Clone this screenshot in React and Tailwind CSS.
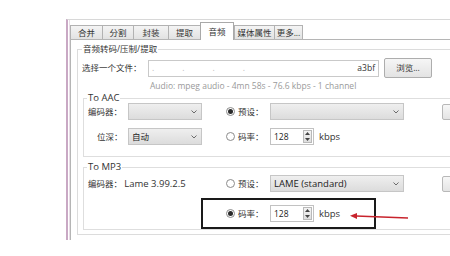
function Radio({ on }) {
  return (
    <span className="w-[9px] h-[9px] rounded-full border border-[#8c8c8c] bg-white flex items-center justify-center shrink-0">
      {on && <span className="w-[5px] h-[5px] rounded-full bg-[#2a2a2a]" />}
    </span>
  );
}

function Select({ width, value }) {
  return (
    <div
      className={`${width} h-[17px] border border-[#c6c6c6] bg-gradient-to-b from-[#efefef] to-[#dcdcdc] flex items-center justify-between pl-[3px] pr-[4px] shrink-0`}
    >
      <span className="text-[#222]">{value}</span>
      <svg width="6" height="4" viewBox="0 0 6 4">
        <path d="M0.5 0.5 L3 3 L5.5 0.5" fill="none" stroke="#6b6b6b" strokeWidth="1" />
      </svg>
    </div>
  );
}

function Spin({ value }) {
  return (
    <div className="w-[44px] h-[17px] border border-[#c2c2c2] bg-white flex items-center shrink-0">
      <span className="flex-1 pl-[3px] text-[#222]">{value}</span>
      <div className="w-[9px] h-[13px] mr-[1px] border border-[#b9b9b9] bg-gradient-to-b from-[#f4f4f4] to-[#dedede] flex flex-col items-center justify-around">
        <svg width="5" height="3" viewBox="0 0 5 3">
          <path d="M0 3 L2.5 0 L5 3 Z" fill="#444" />
        </svg>
        <svg width="5" height="3" viewBox="0 0 5 3">
          <path d="M0 0 L2.5 3 L5 0 Z" fill="#444" />
        </svg>
      </div>
    </div>
  );
}

function SideButton() {
  return <div className="w-[20px] h-[16px] ml-[38px] border border-[#b8b8b8] rounded-[2px] bg-gradient-to-b from-[#f7f7f7] to-[#e4e4e4] shrink-0" />;
}

const tabs = [
  { name: "合并", w: "w-[32px]" },
  { name: "分割", w: "w-[31px]" },
  { name: "封装", w: "w-[35px]" },
  { name: "提取", w: "w-[32px]" },
  { name: "音频", w: "w-[34px]", active: true },
  { name: "媒体属性", w: "w-[40px]" },
  { name: "更多...", w: "w-[29px]" },
];

export default function App() {
  return (
    <div className="w-[450px] h-[256px] bg-white overflow-hidden relative text-[8.5px] leading-[12px] text-[#333] font-['Open_Sans','Noto_Sans_CJK_SC',sans-serif]">
      <div className="ml-[66px] mt-[19px] h-[221px] border-l-2 border-l-[#c9a8c4] border-t border-t-[#d8d8d8]">
        <div className="ml-[1px] h-full border-l border-l-[#e8dde6]">
          {/* tab strip */}
          <div className="flex items-end h-[19px] pt-[2px] w-[400px]">
            {tabs.map((t) =>
              t.active ? (
                <div
                  key={t.name}
                  className={`${t.w} h-[18px] -mb-px relative z-10 bg-white border border-b-0 border-[#a9a9a9] flex items-center justify-center`}
                >
                  {t.name}
                </div>
              ) : (
                <div
                  key={t.name}
                  className={`${t.w} h-[14px] border-t border-l last:border-r border-[#b2b2b2] bg-gradient-to-b from-[#f4f4f4] to-[#e2e2e2] flex items-center justify-center`}
                >
                  {t.name}
                </div>
              )
            )}
          </div>

          {/* panel */}
          <div className="w-[400px] h-[201px] border-t border-l border-[#b5b5b5] bg-white pl-[6px] pt-[2px]">
            <fieldset className="border border-[#dcdcdc] w-[390px] pb-[4px]">
              <legend className="ml-[4px] px-[1px] leading-[14px]">音频转码/压制/提取</legend>

              <div className="flex items-center h-[20px] mt-[2px] pl-[4px]">
                <span className="w-[66px]">选择一个文件：</span>
                <div className="w-[231px] h-[17px] border border-[#c9c9c9] bg-white flex items-center justify-between px-[3px] text-[#bbb]">
                  <span className="tracking-[28px]">....</span>
                  <span className="text-[#333]">a3bf</span>
                </div>
                <div className="w-[48px] h-[20px] ml-[5px] border border-[#adadad] rounded-[2px] bg-gradient-to-b from-[#f6f6f6] to-[#e3e3e3] flex items-center justify-center">
                  浏览...
                </div>
              </div>

              <div className="h-[12px] mt-[2px] pl-[72px] text-[#9a9a9a] whitespace-nowrap">
                Audio: mpeg audio - 4mn 58s - 76.6 kbps - 1 channel
              </div>

              <fieldset className="border border-[#dedede] ml-[5px] w-[380px] pb-[11px]">
                <legend className="ml-[3px] px-[1px] text-[9.5px] leading-[12px]">To AAC</legend>
                <div className="flex items-center h-[17px] -mt-px pl-[4px]">
                  <span className="w-[40px]">编码器：</span>
                  <Select width="w-[74px]" value="" />
                  <span className="ml-[24px]">
                    <Radio on />
                  </span>
                  <span className="w-[35px] pl-[3px]">预设：</span>
                  <Select width="w-[134px]" value="" />
                  <SideButton />
                </div>
                <div className="flex items-center h-[17px] mt-[8px] pl-[4px]">
                  <span className="w-[40px] pl-[9px]">位深：</span>
                  <Select width="w-[74px]" value="自动" />
                  <span className="ml-[24px]">
                    <Radio />
                  </span>
                  <span className="w-[35px] pl-[3px]">码率：</span>
                  <Spin value="128" />
                  <span className="ml-[5px] text-[9.5px]">kbps</span>
                </div>
              </fieldset>

              <fieldset className="border border-[#dedede] ml-[5px] mt-[4px] w-[380px]">
                <legend className="ml-[3px] px-[1px] text-[9.5px] leading-[12px]">To MP3</legend>
                <div className="flex items-center h-[17px] mt-[2px] pl-[4px]">
                  <span className="w-[138px] whitespace-nowrap">
                    编码器： <span className="text-[9.5px]">Lame 3.99.2.5</span>
                  </span>
                  <Radio />
                  <span className="w-[35px] pl-[3px]">预设：</span>
                  <Select width="w-[134px]" value={<span className="text-[9.5px]">LAME (standard)</span>} />
                  <SideButton />
                </div>
                <div className="ml-[117px] mt-[6px] w-[175px] h-[31px] border-2 border-[#1a1a1a] flex items-center pl-[23px]">
                  <Radio on />
                  <span className="w-[35px] pl-[3px]">码率：</span>
                  <Spin value="128" />
                  <span className="ml-[5px] text-[9.5px]">kbps</span>
                </div>
              </fieldset>
            </fieldset>
          </div>
        </div>
      </div>

      {/* red annotation arrow */}
      <svg className="absolute left-[346px] top-[209px]" width="66" height="14" viewBox="0 0 66 14">
        <path d="M62 9 L10 7" stroke="#c8232c" strokeWidth="1.3" fill="none" />
        <path d="M4 6.8 L11 4 L11 10 Z" fill="#c8232c" />
      </svg>
    </div>
  );
}
